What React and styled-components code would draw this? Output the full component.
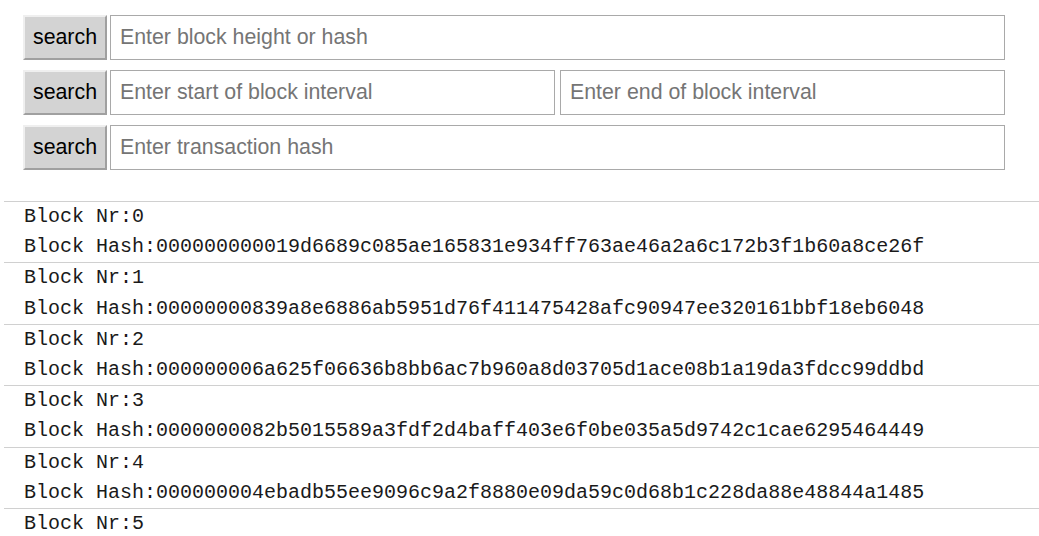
import React from "react";
import styled, { createGlobalStyle } from "styled-components";

const Global = createGlobalStyle`
  html, body { margin: 0; padding: 0; background: #fff; }
  body { font-family: "Liberation Sans", Arial, sans-serif; }
`;

const Page = styled.div`
  padding-top: 15px;
`;

const Form = styled.div`
  display: flex;
  flex-direction: column;
  gap: 10px;
  margin-left: 23px;
  width: 982px;
`;

const Row = styled.div`
  display: flex;
  gap: 3px;
  height: 45px;
`;

const Button = styled.button`
  box-sizing: border-box;
  width: 84px;
  height: 45px;
  flex: none;
  margin: 0;
  padding: 0;
  background: #d3d3d3;
  border-style: solid;
  border-width: 2px;
  border-color: #efefef #a0a0a0 #a0a0a0 #efefef;
  font-family: "Liberation Sans", Arial, sans-serif;
  font-size: 21.33px;
  color: #000;
`;

const Inputs = styled.div`
  flex: 1;
  display: flex;
  gap: 5px;
`;

const Input = styled.input`
  box-sizing: border-box;
  flex: 1;
  min-width: 0;
  height: 45px;
  margin: 0;
  padding: 0 9px;
  border: 1px solid #a9a9a9;
  font-family: "Liberation Sans", Arial, sans-serif;
  font-size: 21.33px;
  color: #000;
  outline: none;
  &::placeholder { color: #757575; opacity: 1; }
`;

const List = styled.div`
  margin-top: 31px;
  margin-left: 4px;
`;

const Block = styled.div`
  border-top: 1px solid #d0d0d0;
  padding-left: 20px;
  font-family: "Liberation Mono", "Courier New", monospace;
  font-size: 20px;
  line-height: 30.2px;
  color: #1a1a1a;
  white-space: nowrap;
`;

const Line = styled.div``;

const blocks = [
  "000000000019d6689c085ae165831e934ff763ae46a2a6c172b3f1b60a8ce26f",
  "00000000839a8e6886ab5951d76f411475428afc90947ee320161bbf18eb6048",
  "000000006a625f06636b8bb6ac7b960a8d03705d1ace08b1a19da3fdcc99ddbd",
  "0000000082b5015589a3fdf2d4baff403e6f0be035a5d9742c1cae6295464449",
  "000000004ebadb55ee9096c9a2f8880e09da59c0d68b1c228da88e48844a1485",
  null,
];

export default function App() {
  return (
    <Page>
      <Global />
      <Form>
        <Row>
          <Button>search</Button>
          <Inputs>
            <Input placeholder="Enter block height or hash" />
          </Inputs>
        </Row>
        <Row>
          <Button>search</Button>
          <Inputs>
            <Input placeholder="Enter start of block interval" />
            <Input placeholder="Enter end of block interval" />
          </Inputs>
        </Row>
        <Row>
          <Button>search</Button>
          <Inputs>
            <Input placeholder="Enter transaction hash" />
          </Inputs>
        </Row>
      </Form>
      <List>
        {blocks.map((h, i) => (
          <Block key={i}>
            <Line>Block Nr:{i}</Line>
            {h && <Line>Block Hash:{h}</Line>}
          </Block>
        ))}
      </List>
    </Page>
  );
}
